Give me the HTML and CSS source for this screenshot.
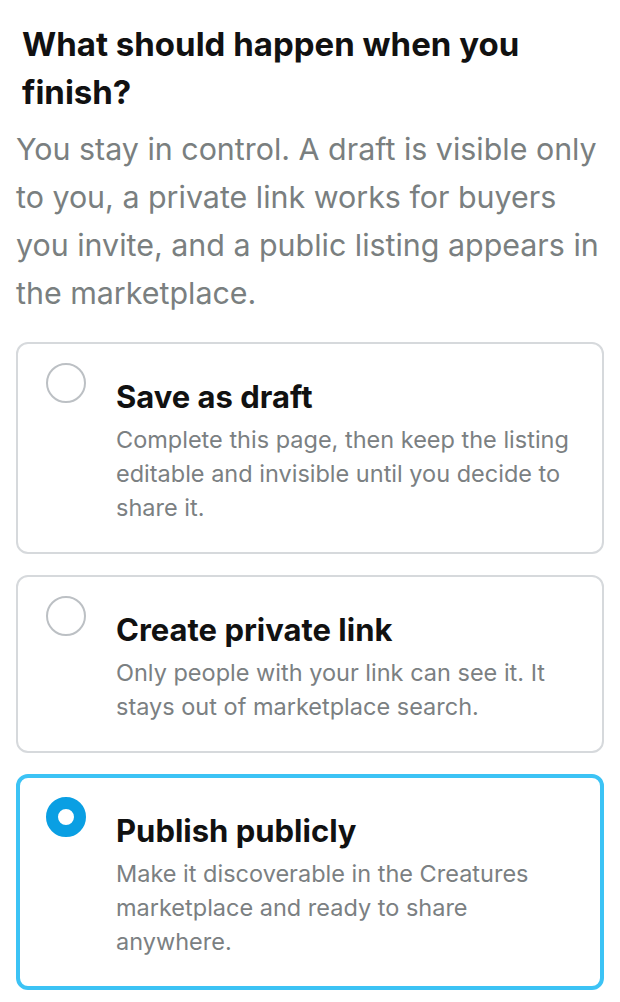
FILE: index.html
```html
<!DOCTYPE html>
<html lang="en">
<head>
<meta charset="utf-8">
<title>Publish options</title>
<link rel="stylesheet" href="styles.css">
</head>
<body>
<main class="page">
  <h1 class="heading">What should happen when you finish?</h1>
  <p class="intro">You stay in control. A draft is visible only to you, a private link works for buyers you invite, and a public listing appears in the marketplace.</p>
  <div class="options">
    <label class="option">
      <span class="radio"></span>
      <span class="text">
        <span class="title">Save as draft</span>
        <span class="desc">Complete this page, then keep the listing editable and invisible until you decide to share it.</span>
      </span>
    </label>
    <label class="option">
      <span class="radio"></span>
      <span class="text">
        <span class="title">Create private link</span>
        <span class="desc">Only people with your link can see it. It stays out of marketplace search.</span>
      </span>
    </label>
    <label class="option selected">
      <span class="radio"></span>
      <span class="text">
        <span class="title">Publish publicly</span>
        <span class="desc">Make it discoverable in the Creatures marketplace and ready to share anywhere.</span>
      </span>
    </label>
  </div>
</main>
</body>
</html>
```

FILE: styles.css
```css
* { box-sizing: border-box; }
html, body { margin: 0; padding: 0; background: #ffffff; }
body { font-family: Inter, "Noto Sans", sans-serif; color: #111111; }
.page { padding: 20px 16px 0 16px; }
.heading {
  margin: 0;
  padding-left: 6px;
  font-size: 33px;
  line-height: 48px;
  font-weight: 700;
  color: #111111;
  letter-spacing: 0;
}
.intro {
  margin: 9px 0 0 0;
  font-size: 30.4px;
  line-height: 48px;
  font-weight: 400;
  color: #7a7f80;
  letter-spacing: 0;
}
.options { display: flex; flex-direction: column; gap: 21px; margin-top: 25px; }
.option {
  display: flex;
  gap: 30px;
  border: 2px solid #d6d9dc;
  border-radius: 12px;
  padding: 19px 28px 27px 28px;
}
.option.selected { border: 4px solid #3cc3f5; padding: 19px 26px 27px 26px; }
.radio {
  flex: none;
  width: 40px;
  height: 40px;
  border-radius: 50%;
  border: 2px solid #bcc0c4;
}
.selected .radio { border: 12px solid #0a9fe3; }
.text { display: flex; flex-direction: column; padding-top: 14px; }
.title { font-size: 31px; line-height: 40px; font-weight: 700; color: #111111; }
.desc { margin-top: 6px; font-size: 23.5px; line-height: 34px; color: #7b8082; letter-spacing: 0; }
```
